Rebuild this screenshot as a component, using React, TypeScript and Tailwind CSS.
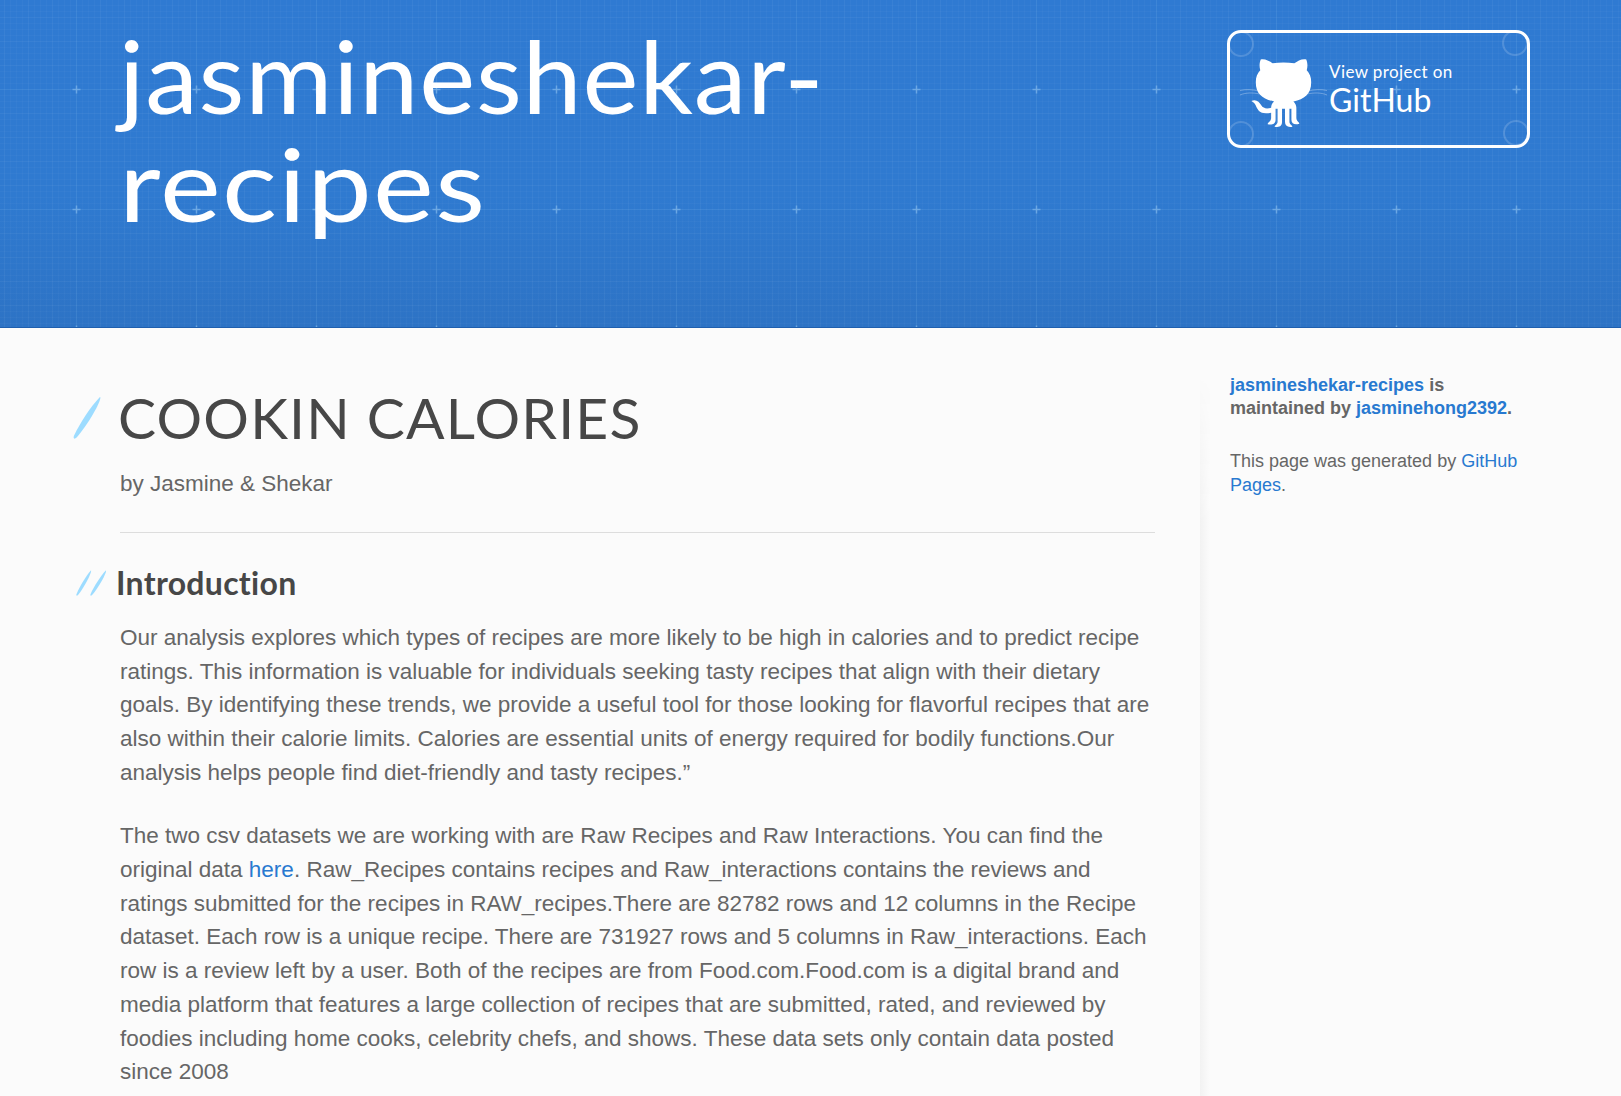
import React from "react";

function Corner({ cx, cy }: { cx: number; cy: number }) {
  return <circle cx={cx} cy={cy} r="12" fill="none" stroke="#fff" strokeOpacity="0.16" strokeWidth="2" />;
}

function Octocat() {
  return (
    <svg className="mt-[8px] block h-[75px] w-[91px] shrink-0" viewBox="0 0 92 75" fill="none">
      <path d="M2 34.500c6-1.500 13-1 19 .5M2 39c6-2.500 13-2.500 20-1M90 34.500c-6-1.500-13-1-19 .5M90 39c-6-2.500-13-2.500-20-1" stroke="#fff" strokeOpacity="0.3" strokeWidth="1" />
      <path d="M23 3c4-1 9 1.500 12 4 7-1 15-1 22 0C60 4.500 65 2 69 3c1.500 4 1.500 7 .5 11 3 3 4.500 7 4.500 12 0 12-7 17-18 19.500 2 2 3 4 3 6.500v10c0 4 3 4 3 6-4 1.500-8 .5-8-4V53h-2v13c0 3 3 3.500 3 5-5 1-7.500-1-7.500-5V53h-3v13c0 4-2 6-7.500 5 0-1.500 3-2 3-5V53h-2v11c0 4.500-4 5.500-8 4.500 0-2 3.500-2.500 3.500-6.500v-5c-11 2-13-2-15-6-1-3-2-4-5-6 5-2 8 1 10 4.500 2 3.500 6 3.500 10 2.500 0-3 1-5 3-6.500C25 43 18 38 18 26c0-5 1.500-9 4.500-12C21.500 10 21.500 7 23 3z" fill="#fff" />
    </svg>
  );
}

function Blueprint() {
  return (
    <svg className="absolute inset-0 h-full w-full" aria-hidden="true">
      <defs>
        <linearGradient id="sky" x1="0" y1="0" x2="0" y2="1">
          <stop offset="0" stopColor="#2f7ad2" />
          <stop offset="0.6" stopColor="#2f7ad0" />
          <stop offset="1" stopColor="#2d73c5" />
        </linearGradient>
        <pattern id="fine" width="6" height="6" x="76" y="89" patternUnits="userSpaceOnUse">
          <path d="M0 .5H6M.5 0V6" stroke="#fff" strokeOpacity="0.025" />
        </pattern>
        <pattern id="mid" width="24" height="24" x="76" y="89" patternUnits="userSpaceOnUse">
          <path d="M0 .5H24M.5 0V24" stroke="#fff" strokeOpacity="0.02" />
        </pattern>
        <pattern id="major" width="120" height="120" x="16" y="29" patternUnits="userSpaceOnUse">
          <path d="M0 60.500H120M60.500 0V120" stroke="#6ab4ee" strokeOpacity="0.1" />
          <path d="M56.500 60.500H64.500M60.500 56.500V64.500" stroke="#a5d4f8" strokeOpacity="0.45" strokeWidth="1.500" />
        </pattern>
      </defs>
      <rect width="100%" height="100%" fill="url(#sky)" />
      <rect width="100%" height="100%" fill="url(#fine)" />
      <rect width="100%" height="100%" fill="url(#mid)" />
      <rect width="100%" height="100%" fill="url(#major)" />
    </svg>
  );
}

function Header() {
  return (
    <header className="relative h-[328px] border-b border-[#1f5fae] bg-[#2f7ad0]">
      <Blueprint />
      <div className="relative flex justify-between pl-[119px] pr-[91px]">
        <h1 className="w-[760px] pt-[21px] font-['Lato',sans-serif] text-[100px] leading-[108px] text-white">
          <span className="block origin-left scale-x-[1.06] whitespace-nowrap tracking-[0.700px]">jasmineshekar-</span>
          <span className="block origin-left scale-x-[1.15] whitespace-nowrap tracking-[1.200px]">recipes</span>
        </h1>
        <a href="#" className="relative mt-[30px] flex h-[118px] w-[303px] items-center rounded-[14px] border-[3px] border-white pl-[8px] text-white">
          <svg className="absolute inset-0 h-full w-full" aria-hidden="true">
            <Corner cx={11} cy={11} />
            <Corner cx={285} cy={10} />
            <Corner cx={11} cy={101} />
            <Corner cx={286} cy={100} />
          </svg>
          <Octocat />
          <span className="flex flex-col font-['Lato',sans-serif] leading-none">
            <span className="whitespace-nowrap text-[17px] leading-[22px] tracking-[0.400px]">View project on</span>
            <span className="whitespace-nowrap text-[32px] leading-[34px]">GitHub</span>
          </span>
        </a>
      </div>
    </header>
  );
}

function Slash({ className }: { className: string }) {
  return (
    <svg className={className} viewBox="0 0 28 44" preserveAspectRatio="none" aria-hidden="true">
      <path d="M26 1C29 1 17 26 3.500 42.500 1 45 0 43 1 40.500 7 27 17 11 26 1z" fill="#9ddcff" />
    </svg>
  );
}

export default function App() {
  return (
    <div className="h-[1096px] w-full overflow-hidden bg-[#fbfbfb] font-['Liberation_Sans',Arial,sans-serif] text-[#666]">
      <Header />
      <div className="flex">
        <main className="w-[1200px] pl-[120px] pr-[45px] pt-[60px] text-[22.5px] leading-[33.75px]">
          <h2 className="relative h-[60px] whitespace-nowrap font-['Lato',sans-serif] text-[57px] leading-[58px] tracking-[1.200px] text-[#474747]">
            <Slash className="absolute -left-[47px] top-[8px] h-[43px] w-[29px]" />
            <span className="-ml-[2px]">COOKIN CALORIES</span>
          </h2>
          <p className="mt-[19px]">by Jasmine &amp; Shekar</p>
          <hr className="mt-[31px] border-[#ddd]" />
          <h3 className="relative mt-[27px] h-[45px] whitespace-nowrap font-['Lato',sans-serif] text-[32px] font-bold leading-[45px] tracking-[0.300px] text-[#474747]">
            <Slash className="absolute -left-[44px] top-[10px] h-[26px] w-[16px]" />
            <Slash className="absolute -left-[30px] top-[10px] h-[26px] w-[17px]" />
            <span className="-ml-[4px]">Introduction</span>
          </h3>
          <p className="mt-[16px] whitespace-nowrap">
            Our analysis explores which types of recipes are more likely to be high in calories and to predict recipe<br />
            ratings. This information is valuable for individuals seeking tasty recipes that align with their dietary<br />
            goals. By identifying these trends, we provide a useful tool for those looking for flavorful recipes that are<br />
            also within their calorie limits. Calories are essential units of energy required for bodily functions.Our<br />
            analysis helps people find diet-friendly and tasty recipes.”
          </p>
          <p className="mt-[29.7px] whitespace-nowrap">
            The two csv datasets we are working with are Raw Recipes and Raw Interactions. You can find the<br />
            original data <a href="#" className="text-[#2879d0]">here</a>. Raw_Recipes contains recipes and Raw_interactions contains the reviews and<br />
            ratings submitted for the recipes in RAW_recipes.There are 82782 rows and 12 columns in the Recipe<br />
            dataset. Each row is a unique recipe. There are 731927 rows and 5 columns in Raw_interactions. Each<br />
            row is a review left by a user. Both of the recipes are from Food.com.Food.com is a digital brand and<br />
            media platform that features a large collection of recipes that are submitted, rated, and reviewed by<br />
            foodies including home cooks, celebrity chefs, and shows. These data sets only contain data posted<br />
            since 2008
          </p>
        </main>
        <aside className="mt-[46px] flex h-[722px] w-[345px] text-[18px] leading-[23.4px]">
          <div className="h-full w-[10px] bg-linear-to-r from-[#f2f2f2] to-[#fbfbfb] [mask-image:linear-gradient(to_bottom,transparent,black_150px)]" />
          <div className="pl-[20px]">
            <p className="whitespace-nowrap font-bold">
              <a href="#" className="text-[#2879d0]">jasmineshekar-recipes</a> is<br />
              maintained by <a href="#" className="text-[#2879d0]">jasminehong2392</a>.
            </p>
            <p className="mt-[29.500px] whitespace-nowrap">
              This page was generated by <a href="#" className="text-[#2879d0]">GitHub<br />Pages</a>.
            </p>
          </div>
        </aside>
      </div>
    </div>
  );
}
